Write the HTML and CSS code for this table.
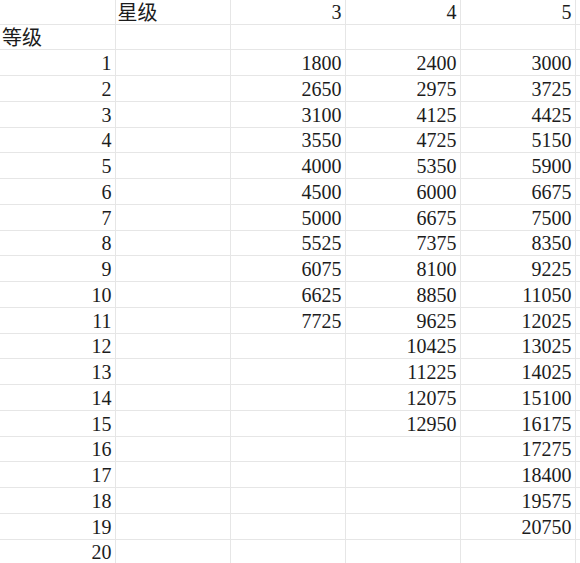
FILE: index.html
```html
<!DOCTYPE html>
<html>
<head>
<meta charset="utf-8">
<title>等级 星级</title>
<link rel="stylesheet" href="styles.css">
</head>
<body>
<table class="sheet">
  <tr class="head"><td></td><td class="txt">星级</td><td>3</td><td>4</td><td>5</td><td class="edge"></td></tr>
  <tr><td class="txt">等级</td><td></td><td></td><td></td><td></td><td class="edge"></td></tr>
  <tr><td>1</td><td></td><td>1800</td><td>2400</td><td>3000</td><td class="edge"></td></tr>
  <tr><td>2</td><td></td><td>2650</td><td>2975</td><td>3725</td><td class="edge"></td></tr>
  <tr><td>3</td><td></td><td>3100</td><td>4125</td><td>4425</td><td class="edge"></td></tr>
  <tr><td>4</td><td></td><td>3550</td><td>4725</td><td>5150</td><td class="edge"></td></tr>
  <tr><td>5</td><td></td><td>4000</td><td>5350</td><td>5900</td><td class="edge"></td></tr>
  <tr><td>6</td><td></td><td>4500</td><td>6000</td><td>6675</td><td class="edge"></td></tr>
  <tr><td>7</td><td></td><td>5000</td><td>6675</td><td>7500</td><td class="edge"></td></tr>
  <tr><td>8</td><td></td><td>5525</td><td>7375</td><td>8350</td><td class="edge"></td></tr>
  <tr><td>9</td><td></td><td>6075</td><td>8100</td><td>9225</td><td class="edge"></td></tr>
  <tr><td>10</td><td></td><td>6625</td><td>8850</td><td>11050</td><td class="edge"></td></tr>
  <tr><td>11</td><td></td><td>7725</td><td>9625</td><td>12025</td><td class="edge"></td></tr>
  <tr><td>12</td><td></td><td></td><td>10425</td><td>13025</td><td class="edge"></td></tr>
  <tr><td>13</td><td></td><td></td><td>11225</td><td>14025</td><td class="edge"></td></tr>
  <tr><td>14</td><td></td><td></td><td>12075</td><td>15100</td><td class="edge"></td></tr>
  <tr><td>15</td><td></td><td></td><td>12950</td><td>16175</td><td class="edge"></td></tr>
  <tr><td>16</td><td></td><td></td><td></td><td>17275</td><td class="edge"></td></tr>
  <tr><td>17</td><td></td><td></td><td></td><td>18400</td><td class="edge"></td></tr>
  <tr><td>18</td><td></td><td></td><td></td><td>19575</td><td class="edge"></td></tr>
  <tr><td>19</td><td></td><td></td><td></td><td>20750</td><td class="edge"></td></tr>
  <tr><td>20</td><td></td><td></td><td></td><td></td><td class="edge"></td></tr>
</table>
</body>
</html>
```
FILE: styles.css
```css
html, body {
  margin: 0;
  padding: 0;
  background: #ffffff;
}
body {
  width: 580px;
  height: 563px;
  overflow: hidden;
  font-family: "Liberation Serif", serif;
  font-size: 20px;
  color: #1c1c1c;
}
.sheet {
  border-collapse: collapse;
  table-layout: fixed;
  width: 580px;
  font-family: "Liberation Serif", serif;
  font-size: 20px;
}
.sheet td {
  box-sizing: border-box;
  height: 25.75px;
  padding: 0 3px 2px 0;
  border-right: 1px solid #e6e6e6;
  border-bottom: 1px solid #e6e6e6;
  line-height: 20px;
  text-align: right;
  vertical-align: bottom;
  white-space: nowrap;
  width: 115px;
}
.sheet .head td {
  height: 24px;
}
.sheet td.txt {
  text-align: left;
  padding-left: 2px;
  font-family: "Noto Sans CJK SC", sans-serif;
}
.sheet td.edge {
  border-right: none;
  width: 5px;
  padding: 0;
}
```
